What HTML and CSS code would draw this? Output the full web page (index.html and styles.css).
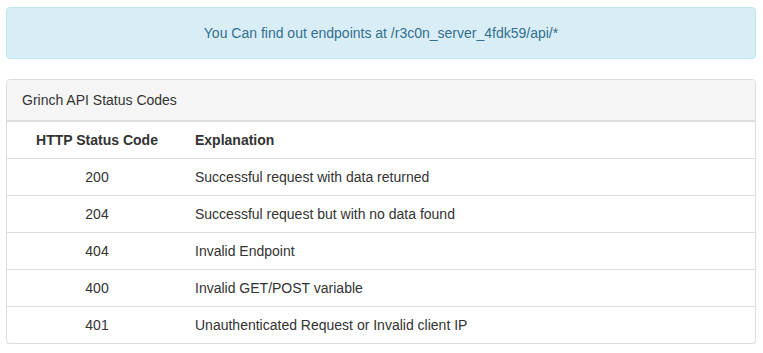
FILE: index.html
```html
<!DOCTYPE html>
<html>
<head>
<meta charset="utf-8">
<link rel="stylesheet" href="styles.css">
</head>
<body>
<div class="page">
  <div class="alert">You Can find out endpoints at /r3c0n_server_4fdk59/api/*</div>
  <div class="panel">
    <div class="panel-heading">Grinch API Status Codes</div>
    <table class="codes">
      <thead>
        <tr><th class="code">HTTP Status Code</th><th>Explanation</th></tr>
      </thead>
      <tbody>
        <tr><td class="code">200</td><td>Successful request with data returned</td></tr>
        <tr><td class="code">204</td><td>Successful request but with no data found</td></tr>
        <tr><td class="code">404</td><td>Invalid Endpoint</td></tr>
        <tr><td class="code">400</td><td>Invalid GET/POST variable</td></tr>
        <tr><td class="code">401</td><td>Unauthenticated Request or Invalid client IP</td></tr>
      </tbody>
    </table>
  </div>
</div>
</body>
</html>
```
FILE: styles.css
```css
* { box-sizing: border-box; }
html, body { margin: 0; padding: 0; background: #fff; }
body {
  font-family: "Liberation Sans", Arial, sans-serif;
  font-size: 14px;
  line-height: 20px;
  color: #333;
}
.page { padding: 7px 7px 0 6px; }
.alert {
  background: #d9edf7;
  border: 1px solid #bce8f1;
  color: #31708f;
  border-radius: 4px;
  padding: 15px;
  text-align: center;
  margin-bottom: 20px;
}
.panel {
  border: 1px solid #ddd;
  border-radius: 4px;
  background: #fff;
  box-shadow: 0 1px 1px rgba(0,0,0,0.05);
  overflow: hidden;
}
.panel-heading {
  background: #f5f5f5;
  border-bottom: 1px solid #ddd;
  padding: 10px 15px;
  font-size: 14px;
  color: #333;
}
.codes {
  width: 100%;
  border-collapse: collapse;
  border-top: 1px solid #ddd;
}
.codes th, .codes td {
  padding: 8px;
  height: 36px;
  text-align: left;
  vertical-align: middle;
}
.codes th { font-weight: bold; }
.codes thead th { border-bottom: 1px solid #ddd; }
.codes tbody tr + tr td { border-top: 1px solid #ddd; }
.codes .code { width: 180px; text-align: center; }
```
